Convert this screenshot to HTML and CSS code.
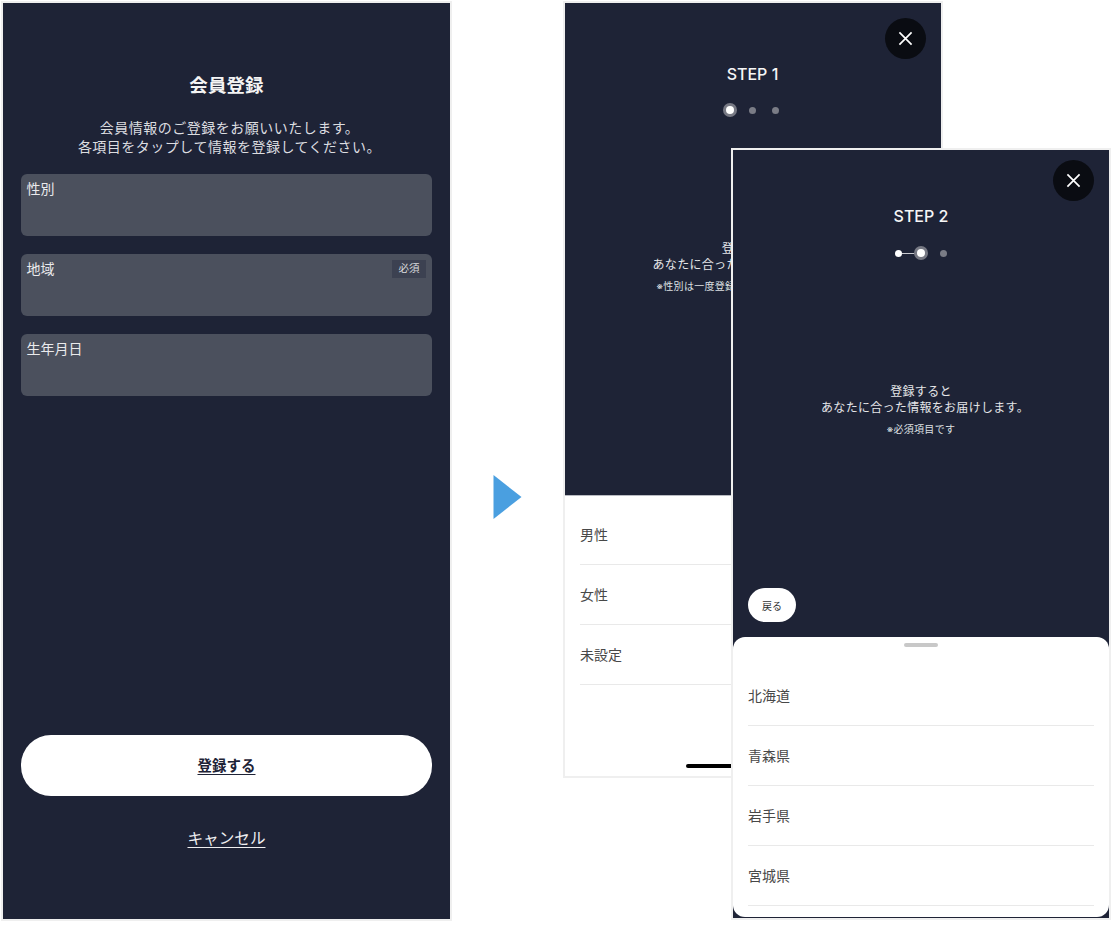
FILE: index.html
```html
<!DOCTYPE html>
<html lang="ja">
<head>
<meta charset="utf-8">
<title>会員登録</title>
<link rel="stylesheet" href="styles.css">
</head>
<body>
<main class="canvas">
  <section class="screen screen-form">
    <h1 class="form-title">会員登録</h1>
    <p class="form-desc">会員情報のご登録をお願いいたします。<br>各項目をタップして情報を登録してください。</p>
    <div class="fields">
      <div class="field"><span>性別</span></div>
      <div class="field"><span>地域</span><span class="badge">必須</span></div>
      <div class="field"><span>生年月日</span></div>
    </div>
    <a class="submit"><span>登録する</span></a>
    <a class="cancel">キャンセル</a>
  </section>

  <svg class="arrow" viewBox="0 0 28 44" aria-hidden="true"><path d="M0 0 L28 22 L0 44 Z"/></svg>

  <section class="screen screen-step screen-step1">
    <button class="close" aria-label="閉じる"><svg viewBox="0 0 16 16"><path d="M1.5 1.5 L14.5 14.5 M14.5 1.5 L1.5 14.5"/></svg></button>
    <h2 class="step-title">STEP 1</h2>
    <div class="dots"><i class="dot dot-active"></i><i class="dot"></i><i class="dot"></i></div>
    <p class="step-msg">登録すると<span class="msg-line">あなたに合った情報をお届けします。</span></p>
    <p class="step-note">※性別は一度登録すると変更できません。</p>
    <div class="sheet sheet-flat">
      <ul class="options">
        <li>男性</li>
        <li>女性</li>
        <li>未設定</li>
      </ul>
      <div class="home-bar"></div>
    </div>
  </section>

  <section class="screen screen-step screen-step2">
    <button class="close" aria-label="閉じる"><svg viewBox="0 0 16 16"><path d="M1.5 1.5 L14.5 14.5 M14.5 1.5 L1.5 14.5"/></svg></button>
    <h2 class="step-title">STEP 2</h2>
    <div class="dots"><i class="dot dot-done"></i><i class="dot dot-active"></i><i class="dot"></i></div>
    <p class="step-msg">登録すると<span class="msg-line">あなたに合った情報をお届けします。</span></p>
    <p class="step-note">※必須項目です</p>
    <a class="back">戻る</a>
    <div class="sheet sheet-round">
      <div class="grabber"></div>
      <ul class="options">
        <li>北海道</li>
        <li>青森県</li>
        <li>岩手県</li>
        <li>宮城県</li>
      </ul>
    </div>
  </section>
</main>
</body>
</html>
```
FILE: styles.css
```css
* { box-sizing: border-box; }
html, body { margin: 0; padding: 0; background: #fff; }
body { font-family: Inter, "Noto Sans CJK JP", sans-serif; overflow: hidden; }
.canvas { position: relative; width: 1116px; height: 926px; }

.screen {
  position: absolute;
  display: flex;
  flex-direction: column;
  background: #1e2336;
  border: 2px solid #efefef;
  color: #fff;
  overflow: hidden;
}

/* Form screen */
.screen-form { left: 1px; top: 1px; width: 451px; height: 920px; padding: 69px 18px 68px; }
.form-title { margin: 0; font-size: 18.5px; line-height: 26px; font-weight: 700; text-align: center; letter-spacing: .1px; color: #f4f4f4; }
.form-desc { margin: 20px 0 18px; padding-left: 6px; font-size: 14px; line-height: 19px; letter-spacing: .5px; text-align: center; color: #dcdde0; }
.fields { display: flex; flex-direction: column; gap: 18px; }
.field {
  position: relative;
  height: 62px;
  padding: 4px 5.5px;
  background: #4b505d;
  border-radius: 6px;
  font-size: 14px;
  line-height: 22px;
  color: #eaeaec;
}
.badge {
  position: absolute;
  top: 6px;
  right: 6px;
  width: 34px;
  height: 18px;
  background: #3c4151;
  font-size: 10.5px;
  line-height: 18px;
  text-align: center;
  color: #d8d9dc;
}
.submit {
  display: flex;
  align-items: center;
  justify-content: center;
  height: 61px;
  margin-top: auto;
  padding-bottom: 2px;
  background: #fff;
  border-radius: 30px;
  color: #1e2336;
  font-size: 14.5px;
  font-weight: 700;
  text-decoration: underline;
  text-underline-offset: 3px;
}
.cancel {
  margin-top: 31px;
  font-size: 15.6px;
  line-height: 24px;
  text-align: center;
  color: #eeeef0;
  text-decoration: underline;
  text-underline-offset: 3px;
}

/* Arrow */
.arrow { position: absolute; left: 493px; top: 475px; width: 29px; height: 44px; fill: #4a9fe0; }

/* Step screens */
.screen-step1 { left: 563px; top: 1px; width: 380px; height: 777px; padding-right: 1px; }
.screen-step2 { left: 731px; top: 148px; width: 380px; height: 772px; }

.close {
  position: absolute;
  top: 15px;
  right: 15px;
  width: 41px;
  height: 41px;
  padding: 0;
  border: 0;
  border-radius: 50%;
  background: #0a0c12;
  display: flex;
  align-items: center;
  justify-content: center;
}
.screen-step2 .close { top: 10px; }
.close svg { width: 15px; height: 15px; fill: none; stroke: #fff; stroke-width: 1.8; }

.step-title { margin: 60px 0 0; font-size: 16px; line-height: 22px; font-weight: 500; text-align: center; color: #f6f6f6; }
.screen-step2 .step-title { margin-top: 55px; }
.dots { display: flex; justify-content: center; margin-top: 18px; height: 14px; align-items: center; }
.screen-step2 .dots { margin-top: 19px; }
.dot { position: relative; display: block; width: 7px; height: 7px; margin: 0 7.75px; border-radius: 50%; background: #7a7c86; }
.dot-active { width: 8px; height: 8px; margin: 0 7.25px; background: #fff; box-shadow: 0 0 0 3px #777984; }
.dot-done { background: #fff; }
.dot-done::after {
  content: "";
  position: absolute;
  left: 7px;
  top: 3px;
  width: 16px;
  height: 1px;
  background: #c9cad0;
}

.step-msg { margin: 124px 0 0; font-size: 12px; line-height: 16px; letter-spacing: .3px; text-align: center; color: #e4e5e8; }
.msg-line { display: block; padding-left: 8px; }
.step-note { margin: 6px 0 0; font-size: 10px; line-height: 14px; letter-spacing: .3px; text-align: center; color: #dfe0e3; }

.sheet { background: #fff; color: #444; }
.sheet-flat { position: relative; height: 281px; margin-top: auto; padding-top: 9px; border-top: 1px solid #b9bbc2; }
.sheet-round { position: relative; height: 280px; margin: 0 0 1px; padding-top: 29px; border-radius: 12px; }

.options { list-style: none; margin: 0; padding: 0 15px; }
.options li {
  height: 60px;
  display: flex;
  align-items: center;
  padding-bottom: 2px;
  border-bottom: 1px solid #e9e9e9;
  font-size: 14px;
  color: #484848;
}
.sheet-flat .options { padding-right: 0; }

.home-bar { position: absolute; left: 121px; bottom: 8px; width: 135px; height: 4px; border-radius: 2px; background: #000; }
.grabber { position: absolute; left: 171px; top: 6px; width: 34px; height: 4px; border-radius: 2px; background: #c8c8c8; }

.back {
  display: flex;
  align-items: center;
  justify-content: center;
  width: 48px;
  height: 34px;
  margin: auto 0 15px 15px;
  background: #fff;
  border-radius: 17px;
  color: #333;
  font-size: 10px;
}
```
